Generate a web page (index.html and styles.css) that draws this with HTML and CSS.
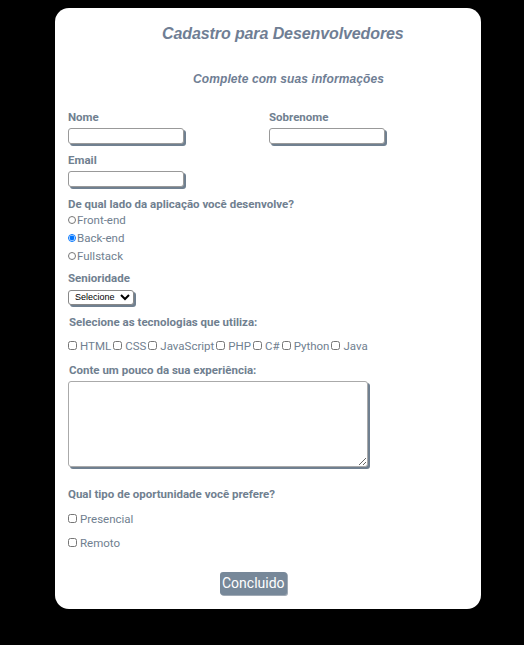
FILE: index.html
```html
<!DOCTYPE html>
<html lang="pt-BR">
<head>
<meta charset="utf-8">
<title>Cadastro para Desenvolvedores</title>
<link rel="stylesheet" href="styles.css">
</head>
<body>
<main class="card">
  <h1 class="title">Cadastro para Desenvolvedores</h1>
  <h2 class="subtitle">Complete com suas informações</h2>
  <form class="form">
    <div class="row-names">
      <div class="field">
        <label class="lbl">Nome</label>
        <input class="txt" type="text">
      </div>
      <div class="field">
        <label class="lbl">Sobrenome</label>
        <input class="txt" type="text">
      </div>
    </div>
    <div class="field field-email">
      <label class="lbl">Email</label>
      <input class="txt" type="text">
    </div>
    <p class="q">De qual lado da aplicação você desenvolve?</p>
    <label class="radio radio-first"><input type="radio" name="lado">Front-end</label>
    <label class="radio"><input type="radio" name="lado" checked>Back-end</label>
    <label class="radio"><input type="radio" name="lado">Fullstack</label>
    <p class="q q-sen">Senioridade</p>
    <select class="sel"><option>Selecione</option></select>
    <p class="q q-tec">Selecione as tecnologias que utiliza:</p>
    <div class="checks">
      <label class="chk"><input type="checkbox"> HTML</label>
      <label class="chk"><input type="checkbox"> CSS</label>
      <label class="chk"><input type="checkbox"> JavaScript</label>
      <label class="chk"><input type="checkbox"> PHP</label>
      <label class="chk"><input type="checkbox"> C#</label>
      <label class="chk"><input type="checkbox"> Python</label>
      <label class="chk"><input type="checkbox"> Java</label>
    </div>
    <p class="q q-exp">Conte um pouco da sua experiência:</p>
    <textarea class="area"></textarea>
    <p class="q q-op">Qual tipo de oportunidade você prefere?</p>
    <label class="chk chk-row"><input type="checkbox"> Presencial</label>
    <label class="chk chk-row"><input type="checkbox"> Remoto</label>
    <div class="actions"><button type="button" class="btn">Concluido</button></div>
  </form>
</main>
</body>
</html>
```
FILE: styles.css
```css
html, body { margin: 0; padding: 0; }
body {
  background: #000;
  font-family: Roboto, "Liberation Sans", Arial, sans-serif;
  color: #708090;
  padding-top: 8px;
  height: 645px;
  box-sizing: border-box;
}
.card {
  width: 426px;
  height: 601px;
  margin-left: 55px;
  background: #fff;
  border-radius: 14px;
  box-sizing: border-box;
  padding: 0 13px;
}
.title {
  margin: 0;
  padding-top: 16px;
  padding-left: 94px;
  font: italic bold 16px "Liberation Sans", sans-serif;
  color: #6f7e94;
  letter-spacing: -0.1px;
  line-height: 20px;
  white-space: nowrap;
}
.subtitle {
  margin: 0;
  padding-top: 27px;
  padding-left: 125px;
  font: italic bold 12px "Liberation Sans", sans-serif;
  color: #6f7e94;
  letter-spacing: 0.1px;
  line-height: 16px;
  white-space: nowrap;
}
.form { padding-top: 23px; }
.row-names { display: flex; gap: 85px; }
.field { display: flex; flex-direction: column; }
.lbl { font-weight: bold; font-size: 11.5px; line-height: 14px; }
.txt {
  width: 116px; height: 16px; box-sizing: border-box;
  margin: 4px 0 0; padding: 0;
  border: 1px solid #999; border-radius: 3px;
  box-shadow: 2px 2px 0 #708090;
}
.field-email { margin-top: 9px; }
.q { margin: 0; font-weight: bold; font-size: 11.5px; line-height: 14px; }
.form > .q:first-of-type { margin-top: 10px; }
.radio {
  display: flex; align-items: center;
  font-size: 11.5px; line-height: 14px; height: 14px; margin-top: 4px;
}
.radio-first { margin-top: 2px; }
.radio input { margin: 0 1px 0 0; width: 8px; height: 8px; }
.q-sen { margin-top: 8px; }
.sel {
  margin-top: 4px; width: 66px; height: 15px; font-size: 9px;
  font-family: "Liberation Sans", Arial, sans-serif;
  border: 1px solid #888; border-radius: 3px; padding: 0 0 0 2px;
  box-shadow: 2px 2px 0 #708090; color: #000; background: #fff;
}
.q-tec { margin-top: 10px; padding-left: 1px; }
.checks { display: flex; gap: 2px; margin-top: 10px; }
.chk { display: flex; align-items: center; font-size: 11.5px; line-height: 14px; }
.chk input { margin: 0 3px 0 0; width: 9px; height: 9px; }
.q-exp { margin-top: 10px; padding-left: 1px; }
.area {
  display: block; margin-top: 4px; width: 300px; height: 86px;
  box-sizing: border-box; border: 1px solid #aaa; border-radius: 3px;
  box-shadow: 2px 2px 0 #708090; resize: both;
}
.q-op { margin-top: 20px; }
.chk-row { margin-top: 11px; }
.chk-row + .chk-row { margin-top: 10px; }
.actions { display: flex; margin-top: 22px; padding-left: 152px; }
.btn {
  background: #778899; color: #fff; border: none; border-radius: 3px;
  font: 14px Roboto, "Liberation Sans", Arial, sans-serif; padding: 3px 2px; height: 23px;
  box-shadow: 1px 1px 0 #a0aab5;
}
```
